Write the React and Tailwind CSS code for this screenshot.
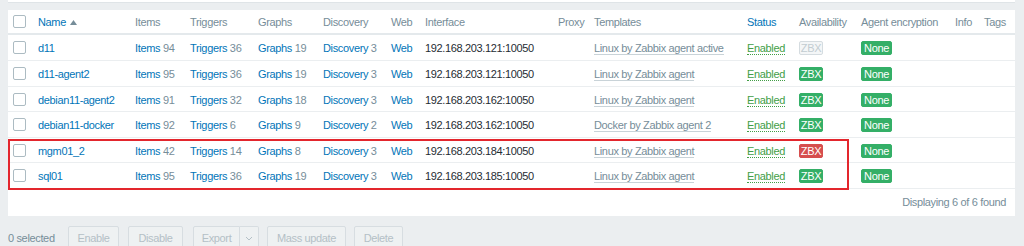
const hosts = [
  { name: "d11", items: 94, triggers: 36, graphs: 19, disc: 3, ip: "192.168.203.121:10050", tpl: "Linux by Zabbix agent active", zbx: "off", h: "h-[26px]" },
  { name: "d11-agent2", items: 95, triggers: 36, graphs: 19, disc: 3, ip: "192.168.203.121:10050", tpl: "Linux by Zabbix agent", zbx: "ok", h: "h-[26px]" },
  { name: "debian11-agent2", items: 91, triggers: 32, graphs: 18, disc: 3, ip: "192.168.203.162:10050", tpl: "Linux by Zabbix agent", zbx: "ok", h: "h-[25px]" },
  { name: "debian11-docker", items: 92, triggers: 6, graphs: 9, disc: 2, ip: "192.168.203.162:10050", tpl: "Docker by Zabbix agent 2", zbx: "ok", h: "h-[26px]" },
  { name: "mgm01_2", items: 42, triggers: 14, graphs: 8, disc: 3, ip: "192.168.203.184:10050", tpl: "Linux by Zabbix agent", zbx: "err", h: "h-[25px]" },
  { name: "sql01", items: 95, triggers: 36, graphs: 19, disc: 3, ip: "192.168.203.185:10050", tpl: "Linux by Zabbix agent", zbx: "ok", h: "h-[26px]" },
];

const cols =
  "grid grid-cols-[30px_97px_55px_68px_65px_68px_34px_133px_36px_153px_52px_62px_94px_29px_31px] items-center pt-[2px]";

function Checkbox() {
  return <span className="block w-[13px] h-[13px] -mt-[2px] rounded-[2px] border border-[#acbbc2] bg-white" />;
}

function Zbx({ state }) {
  if (state === "off")
    return (
      <span className="inline-block w-[24px] text-center leading-[12px] rounded-[2px] border border-[#d5dce0] bg-[#f4f6f7] text-[#c2ccd1]">
        ZBX
      </span>
    );
  const bg = state === "err" ? "bg-[#d64e4e] border-[#d64e4e]" : "bg-[#34af67] border-[#34af67]";
  return (
    <span className={`inline-block w-[24px] text-center leading-[12px] rounded-[2px] border text-white ${bg}`}>ZBX</span>
  );
}

function Btn({ children, className = "" }) {
  return (
    <span
      className={`h-[24px] flex items-center justify-center border border-[#d7dde1] bg-[#eef1f2] text-[#b4c0c6] rounded-[2px] ${className}`}
    >
      {children}
    </span>
  );
}

export default function App() {
  return (
    <div
      className="w-[1024px] h-[246px] overflow-hidden bg-[#ebeef0] text-[11px] tracking-[-0.35px] relative"
      style={{ fontFamily: '"Liberation Sans", Arial, sans-serif' }}
    >
      {/* filter panel edge */}
      <div className="mx-[8px] h-[3px] bg-white border-b border-[#dfe4e7] w-[1007px]" />

      {/* hosts table */}
      <div className="ml-[8px] mt-[7px] w-[1007px] bg-white">
        <div className={`${cols} h-[25px] border-b-2 border-[#e4e9ec] text-[#768d99]`}>
          <span className="pl-[5px]">
            <Checkbox />
          </span>
          <span className="text-[#0275b8] flex items-center gap-[4px]">
            Name
            <svg width="7" height="5" viewBox="0 0 7 5">
              <path d="M0 5 L3.5 0 L7 5 Z" fill="#768d99" />
            </svg>
          </span>
          <span>Items</span>
          <span>Triggers</span>
          <span>Graphs</span>
          <span>Discovery</span>
          <span>Web</span>
          <span>Interface</span>
          <span>Proxy</span>
          <span>Templates</span>
          <span className="text-[#0275b8]">Status</span>
          <span>Availability</span>
          <span>Agent encryption</span>
          <span>Info</span>
          <span>Tags</span>
        </div>

        {hosts.map((h) => (
          <div key={h.name} className={`${cols} ${h.h} border-b border-[#ebeef0] text-[#768d99]`}>
            <span className="pl-[5px]">
              <Checkbox />
            </span>
            <span className="text-[#0275b8]">{h.name}</span>
            <span>
              <span className="text-[#0275b8]">Items</span> {h.items}
            </span>
            <span>
              <span className="text-[#0275b8]">Triggers</span> {h.triggers}
            </span>
            <span>
              <span className="text-[#0275b8]">Graphs</span> {h.graphs}
            </span>
            <span>
              <span className="text-[#0275b8]">Discovery</span> {h.disc}
            </span>
            <span className="text-[#0275b8]">Web</span>
            <span className="text-[#1f2c33]">{h.ip}</span>
            <span />
            <span className="whitespace-nowrap">
              <span className="border-b border-[#c9d3d8] leading-[14px]">{h.tpl}</span>
            </span>
            <span>
              <span className="text-[#429e47] border-b border-dotted border-[#429e47] leading-[14px]">Enabled</span>
            </span>
            <span>
              <Zbx state={h.zbx} />
            </span>
            <span>
              <span className="inline-block w-[31px] text-center leading-[12px] rounded-[2px] border border-[#34af67] bg-[#34af67] text-white">
                None
              </span>
            </span>
            <span />
            <span />
          </div>
        ))}

        <div className="h-[27px] flex items-center justify-end pr-[9px] text-[#768d99]">Displaying 6 of 6 found</div>
      </div>

      {/* action bar */}
      <div className="flex items-center mt-[10px] pl-[8px] text-[#768d99]">
        <span className="w-[60px]">0 selected</span>
        <Btn className="w-[51px]">Enable</Btn>
        <Btn className="w-[55px] ml-[9px]">Disable</Btn>
        <div className="flex ml-[10px]">
          <Btn className="w-[47px] rounded-r-none">Export</Btn>
          <Btn className="w-[19px] border-l-0 rounded-l-none">
            <svg width="8" height="5" viewBox="0 0 8 5">
              <path d="M1 1 L4 4 L7 1" stroke="#b4c0c6" fill="none" strokeWidth="1" />
            </svg>
          </Btn>
        </div>
        <Btn className="w-[79px] ml-[8px]">Mass update</Btn>
        <Btn className="w-[49px] ml-[8px]">Delete</Btn>
      </div>

      {/* annotation highlight */}
      <div className="absolute left-[8px] top-[139px] w-[841px] h-[51px] border-2 border-[#e3262d] pointer-events-none" />
    </div>
  );
}
